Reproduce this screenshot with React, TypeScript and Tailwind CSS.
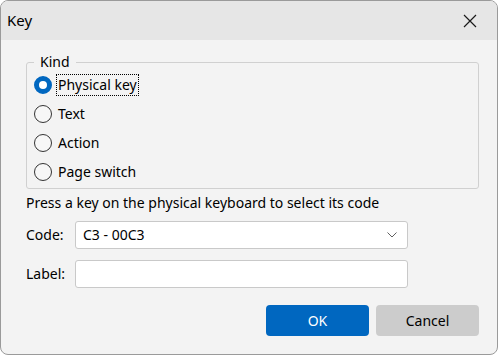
import React from 'react';

const font = { fontFamily: '"Noto Sans", "Open Sans", sans-serif' };

const Radio: React.FC<{ label: string; checked?: boolean }> = ({ label, checked }) => (
  <div className="flex h-[29px] items-center">
    {checked ? (
      <span className="box-border h-[18px] w-[18px] shrink-0 rounded-full border-[5px] border-[#0067c0] bg-white" />
    ) : (
      <span className="box-border h-[18px] w-[18px] shrink-0 rounded-full border-[1.5px] border-[#333333] bg-[#f7f7f7]" />
    )}
    <span
      className={`ml-[4px] px-[1px] leading-[20px] ${
        checked ? 'border border-dotted border-black' : 'border border-transparent'
      }`}
    >
      {label}
    </span>
  </div>
);

export default function App() {
  return (
    <div className="h-[356px] w-[499px] bg-white text-[14px] text-black" style={font}>
      <div className="flex h-[355px] w-[498px] flex-col overflow-hidden rounded-[8px] border border-[#9a9a9a] bg-[#f3f3f3]">
        <div className="flex h-[39px] shrink-0 items-center justify-between bg-[#e6e6e6] pl-[6px] pr-[20px]">
          <span className="text-[15px]">Key</span>
          <svg width="14" height="14" viewBox="0 0 14 14" fill="none" stroke="#1a1a1a" strokeWidth="1.2">
            <path d="M1 1 L13 13 M13 1 L1 13" />
          </svg>
        </div>

        <div className="flex flex-col pl-[25px] pr-[18px] pt-[12px]">
          <fieldset className="rounded-[3px] border border-[#d0d0d0] px-[7px] pb-[1px]">
            <legend className="px-[6px] leading-[20px]">Kind</legend>
            <div className="-mt-[1.5px]">
              <Radio label="Physical key" checked />
              <Radio label="Text" />
              <Radio label="Action" />
              <Radio label="Page switch" />
            </div>
          </fieldset>

          <div className="mt-[4px] leading-[20px]">Press a key on the physical keyboard to select its code</div>

          <div className="mt-[8px] flex items-center">
            <span className="w-[49px]">Code:</span>
            <div className="flex h-[28px] w-[333px] items-center justify-between rounded-[3px] border border-[#c9c9c9] bg-white pl-[7px] pr-[10px]">
              <span>C3 - 00C3</span>
              <svg width="10" height="6" viewBox="0 0 10 6" fill="none" stroke="#606060" strokeWidth="1">
                <path d="M0.5 0.5 L5 5 L9.5 0.5" />
              </svg>
            </div>
          </div>

          <div className="mt-[11px] flex items-center">
            <span className="w-[49px]">Label:</span>
            <div className="h-[28px] w-[333px] rounded-[3px] border border-[#c9c9c9] bg-white" />
          </div>

          <div className="mt-[17px] flex justify-end gap-[7px]">
            <button className="h-[31px] w-[103px] rounded-[4px] bg-[#0067c0] text-white">OK</button>
            <button className="h-[31px] w-[103px] rounded-[4px] bg-[#cccccc] text-black">Cancel</button>
          </div>
        </div>
      </div>
    </div>
  );
}
